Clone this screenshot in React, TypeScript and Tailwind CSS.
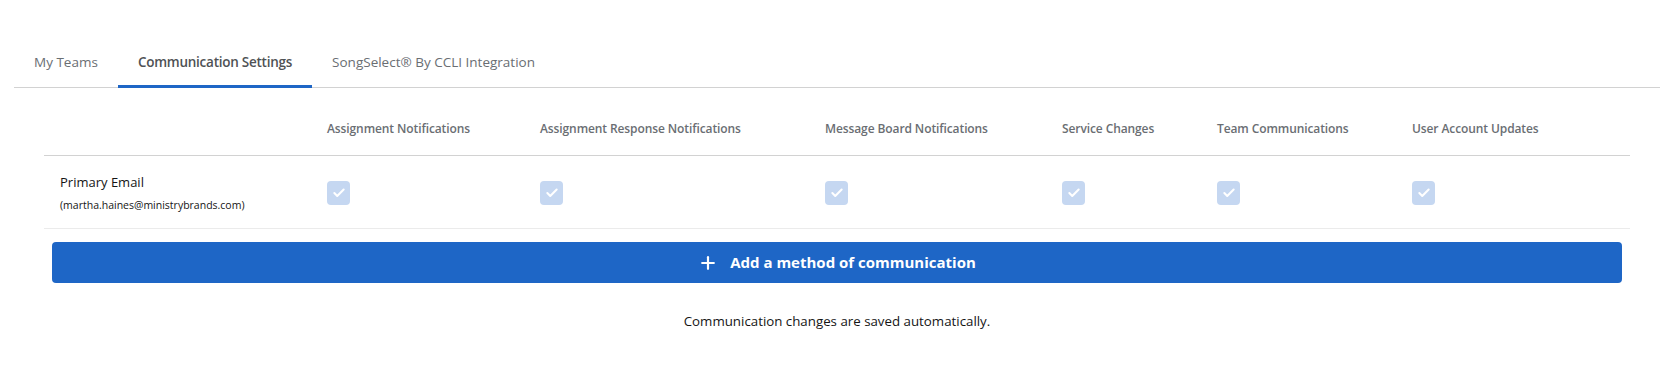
import React, { useState } from "react";
import { Plus, Check } from "lucide-react";

const columns = [
  { label: "Assignment Notifications", w: "w-[213px]" },
  { label: "Assignment Response Notifications", w: "w-[285px]" },
  { label: "Message Board Notifications", w: "w-[237px]" },
  { label: "Service Changes", w: "w-[155px]" },
  { label: "Team Communications", w: "w-[195px]" },
  { label: "User Account Updates", w: "w-[234px]" },
];

const tabs = ["My Teams", "Communication Settings", "SongSelect® By CCLI Integration"];

export default function App() {
  const [active, setActive] = useState(1);

  return (
    <div className="min-h-[366px] bg-white pt-10 pl-[14px] pr-[7px] font-['Open_Sans',sans-serif] text-[#151515]">
      {/* Tabs */}
      <div className="flex border-b border-[#d2d2d2]">
        {tabs.map((t, i) => (
          <button
            key={t}
            onClick={() => setActive(i)}
            className={`px-5 pt-3 pb-[13px] text-[13.5px] leading-5 border-b-[3px] -mb-px ${
              active === i
                ? "border-[#1e66c6] font-semibold tracking-[-0.25px] text-[#4f5255]"
                : "border-transparent text-[#6a6e73]"
            }`}
          >
            {t}
          </button>
        ))}
      </div>

      <div className="mx-[30px] mt-[15px]">
        <table className="w-full table-fixed border-collapse">
          <thead>
            <tr className="border-b border-[#d2d2d2]">
              <th className="w-[267px]" />
              {columns.map((c) => (
                <th
                  key={c.label}
                  className={`${c.w} pl-4 pt-[18px] pb-[18px] text-left text-[12px] leading-4 font-semibold tracking-[-0.1px] text-[#6a6e73] whitespace-nowrap`}
                >
                  {c.label}
                </th>
              ))}
            </tr>
          </thead>
          <tbody>
            <tr className="border-b border-[#ebebeb]">
              <td className="pl-4 pt-[16px] pb-[15px]">
                <div className="text-[13px] leading-5">Primary Email</div>
                <div className="mt-[5px] text-[10.5px] leading-4">(martha.haines@ministrybrands.com)</div>
              </td>
              {columns.map((c) => (
                <td key={c.label} className="pl-4 align-middle">
                  <span className="mt-[2px] flex h-6 w-[23px] items-center justify-center rounded-[4px] bg-[#c5d7f1]">
                    <Check className="h-[14px] w-[14px] text-white" strokeWidth={3.5} />
                  </span>
                </td>
              ))}
            </tr>
          </tbody>
        </table>

        <button className="mx-2 mt-[13px] flex h-[41px] w-[calc(100%-16px)] items-center justify-center gap-[12px] rounded-[4px] bg-[#1e66c6] text-[15px] font-bold text-white">
          <Plus className="h-5 w-5" strokeWidth={2.6} />
          Add a method of communication
        </button>

        <p className="mt-[28px] text-center text-[13.3px] leading-5">
          Communication changes are saved automatically.
        </p>
      </div>
    </div>
  );
}
